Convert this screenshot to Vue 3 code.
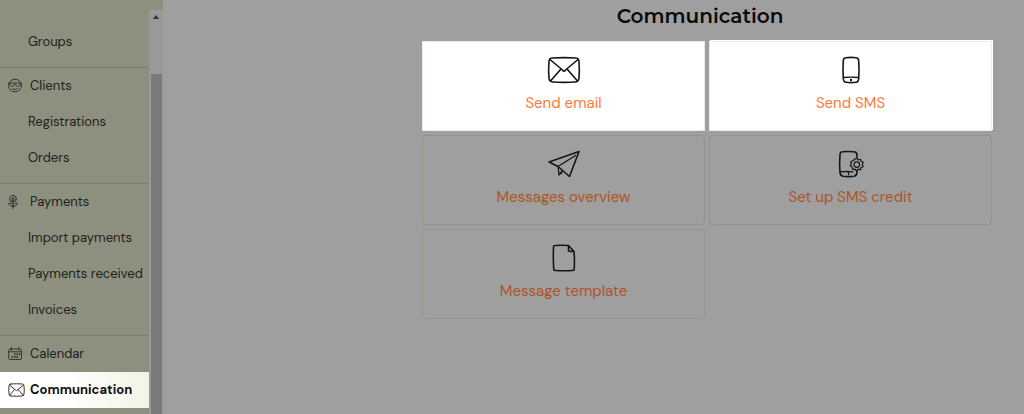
<script setup>
const sections = [
  { items: [{ label: 'Groups', sub: true }] },
  {
    items: [
      { label: 'Clients', icon: 'clients' },
      { label: 'Registrations', sub: true },
      { label: 'Orders', sub: true },
    ],
  },
  {
    items: [
      { label: 'Payments', icon: 'payments' },
      { label: 'Import payments', sub: true },
      { label: 'Payments received', sub: true },
      { label: 'Invoices', sub: true },
    ],
  },
  {
    items: [
      { label: 'Calendar', icon: 'calendar' },
      { label: 'Communication', icon: 'mail', current: true },
    ],
  },
]

const cards = [
  { label: 'Send email', icon: 'mail', lit: true },
  { label: 'Send SMS', icon: 'phone', lit: true, raised: true },
  { label: 'Messages overview', icon: 'plane' },
  { label: 'Set up SMS credit', icon: 'phoneGear' },
  { label: 'Message template', icon: 'file' },
]
</script>

<template>
  <div class="page">
    <aside class="sidebar">
      <nav class="menu" aria-label="Main">
        <ul v-for="(section, i) in sections" :key="i" class="section">
          <li v-for="item in section.items" :key="item.label">
            <a
              href="#"
              class="item"
              :class="{ sub: item.sub, current: item.current }"
              :aria-current="item.current ? 'page' : undefined"
            >
              <svg v-if="item.icon === 'clients'" class="glyph" viewBox="0 0 17 16" aria-hidden="true">
                <ellipse cx="7" cy="7.500" rx="6.500" ry="6.300" />
                <path d="M.5 5.500C5 4.600 9 4.600 13.500 5.500M1.800 6c.3 3.200 4.200 3 4.600.2.300-.4.900-.4 1.200 0 .400 2.800 4.300 3 4.600-.2M4.500 10.500c1.500 1.400 3.500 1.400 5 0" />
              </svg>
              <svg v-else-if="item.icon === 'payments'" class="glyph" viewBox="0 0 17 16" aria-hidden="true">
                <ellipse cx="5" cy="4.700" rx="3.400" ry="3.400" />
                <path d="M5 3.500v11M3.600 4.200Q5 2.500 6.400 4.200M3.600 6Q5 7.200 6.400 6M5 11.500C4.500 9.300 2.500 8.800.7 9.200c.3 2.300 2 3.300 4.300 3.300M5 11.500c.5-2.200 2.500-2.700 4.300-2.300-.3 2.300-2 3.300-4.300 3.300" />
              </svg>
              <svg v-else-if="item.icon === 'calendar'" class="glyph" viewBox="0 0 17 16" aria-hidden="true">
                <path d="M2.500 3h9.500Q13.500 3 13.500 4.500v7.500q0 1.500-1.500 1.500H2.200Q.7 13.500.7 12V4.500Q.7 3 2.500 3ZM.7 5.800H13.500M3.500 1.500V4M10.800 1.500V4" />
                <path class="dots" d="M6.200 8.300h1.400M8.500 8.300h1.400M10.800 8.300h1.400M3.500 11h1.400M6.200 11h1.400M8.500 11h1.400" />
              </svg>
              <svg v-else-if="item.icon === 'mail'" class="glyph" viewBox="0 0 34 28" aria-hidden="true">
                <path class="wide" d="M5 2Q17 1 29 2q3 0 3 4 1 8 0 16-.5 4-4 4-11 1-22 0-4-.3-4-4-.8-8 0-16 0-4 3-4ZM3 4l12 10q2 2.500 4 0L31 4M3 25l10-12M31 25 20 13" />
              </svg>
              <span>{{ item.label }}</span>
            </a>
          </li>
        </ul>
      </nav>
      <div class="scrollbar" aria-hidden="true">
        <svg class="arrow" viewBox="0 0 6 4"><path d="M0 4 3 0l3 4z" /></svg>
        <div class="thumb"></div>
      </div>
    </aside>

    <main class="main">
      <div class="content">
        <h1>Communication</h1>
        <div class="cards">
          <a
            v-for="card in cards"
            :key="card.label"
            href="#"
            class="card"
            :class="{ lit: card.lit, raised: card.raised }"
          >
            <svg class="picture" viewBox="0 0 34 28" aria-hidden="true">
              <path
                v-if="card.icon === 'mail'"
                d="M5 2Q17 1.300 29 2q3 0 3 4 .7 8 0 16-.3 4-4 4-11 .8-22 0-3.800-.3-4-4-.8-8 0-16 0-4 3-4ZM3 3.500l12.500 10.500q1.500 2.500 3 0L31 3.500M3.500 25 14 13M30.500 25 20 13"
              />
              <template v-else-if="card.icon === 'phone'">
                <path d="M12 1.800q5-.8 10 0 2.500.2 2.700 3 .7 8.500 0 17.500 0 3.800-2.700 4-5 .7-10 0-2.700 0-2.700-4-.6-9 0-17.500 0-2.800 2.700-3Z" />
                <path class="thin" d="M9.500 21.500q7.500-.6 15 0" />
                <circle class="solid" cx="17" cy="24" r="1.200" />
              </template>
              <template v-else-if="card.icon === 'plane'">
                <path d="M32 1.500 2 12l9 4.500L22.500 26.500Z" />
                <path class="thin" d="M11 16.500 28.500 5.500M11 16.500 12 25l3.500-4.500M12 24.500l3-1.500" />
              </template>
              <template v-else-if="card.icon === 'phoneGear'">
                <path d="M23 7V5q0-3-3-3.200-6-.6-11.500 0-2.500.2-2.500 3-.8 9 0 17.500 0 3.500 3 4 5.500.7 11 0 3-.5 3-4V21" />
                <path class="thin" d="M6 21.800q7-.6 13 0M14.500 22.500v2" />
                <path class="gear" d="m21 9 2-1 1 2 2.500-.8.7 2.300 2 .8-.9 2.200.9 2.200-2.200.8-.5 2.300-2.500-.7L22.500 21l-1.600-1.900-2.400.3-.3-2.400-2-1.300 1.200-2-.7-2.200 2.300-.7Z" />
                <circle class="gear" cx="22.800" cy="14.600" r="2.800" />
              </template>
              <path
                v-else
                d="M8 1.500q6-.5 13.500 0L27 7.500q.8 9 .2 17.500 0 1.500-1.700 1.500-8 .6-17 0-1.800 0-1.800-1.800Q6 14 6.500 3q0-1.500 1.500-1.500ZM21.500 1.500V7q0 .5 5.500.5"
              />
            </svg>
            <span>{{ card.label }}</span>
          </a>
        </div>
      </div>
    </main>
  </div>
</template>

<style>
body {
  margin: 0;
  background: #9f9f9f;
}
</style>

<style scoped>
.page {
  display: flex;
  min-height: 100vh;
  background: #9f9f9f;
  font-family: "DM Sans", Inter, "Liberation Sans", sans-serif;
}

.sidebar {
  display: flex;
  flex: none;
  width: 163px;
  background: #8e907f;
}

.menu {
  flex: 1;
  min-width: 0;
  padding-top: 24px;
}

.section {
  margin: 0;
  padding: 0 0 7px;
  list-style: none;
}

.section + .section {
  border-top: 1px solid #7c7e6e;
}

.item {
  display: flex;
  align-items: center;
  gap: 5px;
  height: 36px;
  padding-left: 8px;
  color: #20211c;
  font-size: 13px;
  line-height: 20px;
  text-decoration: none;
  white-space: nowrap;
}

.item.sub {
  padding-left: 28px;
}

.item.current {
  background: linear-gradient(90deg, #fff 45%, #f1f3e3);
  color: #111;
  font-weight: 700;
}

.glyph {
  flex: none;
  width: 17px;
  height: 16px;
  fill: none;
  stroke: #35362f;
  stroke-width: 1;
  stroke-linecap: round;
  stroke-linejoin: round;
}

.glyph .wide {
  stroke-width: 2;
}

.glyph .dots {
  stroke-width: 2;
  stroke-linecap: butt;
}

.scrollbar {
  display: flex;
  flex-direction: column;
  align-items: center;
  width: 14px;
  margin-top: 10px;
  background: #999999;
}

.arrow {
  flex: none;
  width: 6px;
  height: 4px;
  margin: 5px 0 55px;
  fill: #333;
}

.thumb {
  flex: 1;
  width: 11px;
  background: #7a7a7a;
}

.main {
  display: grid;
  flex: 1;
  grid-template-columns: 259fr 570fr 32fr;
  align-items: start;
  min-width: 0;
}

.content {
  grid-column: 2;
  min-width: 0;
}

h1 {
  margin: 0;
  padding: 4px 14px 13px 0;
  color: #0a0a0a;
  font-family: Montserrat, Inter, "Liberation Sans", sans-serif;
  font-size: 20px;
  font-weight: 600;
  line-height: 24px;
  text-align: center;
}

.cards {
  display: grid;
  grid-template-columns: repeat(2, minmax(0, 1fr));
  gap: 4px;
}

.card {
  display: flex;
  flex-direction: column;
  align-items: center;
  gap: 8px;
  box-sizing: border-box;
  min-height: 90px;
  padding: 14px 8px 12px;
  border: 1px solid #93948a;
  border-radius: 4px;
  color: #ad5427;
  font-size: 15px;
  line-height: 22px;
  text-decoration: none;
}

.card.lit {
  border-color: #ecece0;
  border-radius: 0;
  background: #fff;
  color: #ff7a36;
}

.card.raised {
  box-shadow: 1px -1px 0 #fff;
}

.picture {
  width: 34px;
  height: 28px;
  fill: none;
  stroke: #151515;
  stroke-width: 1.6;
  stroke-linecap: round;
  stroke-linejoin: round;
}

.picture .thin {
  stroke-width: 1.3;
}

.picture .gear {
  stroke-width: 1.2;
}

.picture .solid {
  fill: #151515;
  stroke: none;
}
</style>
